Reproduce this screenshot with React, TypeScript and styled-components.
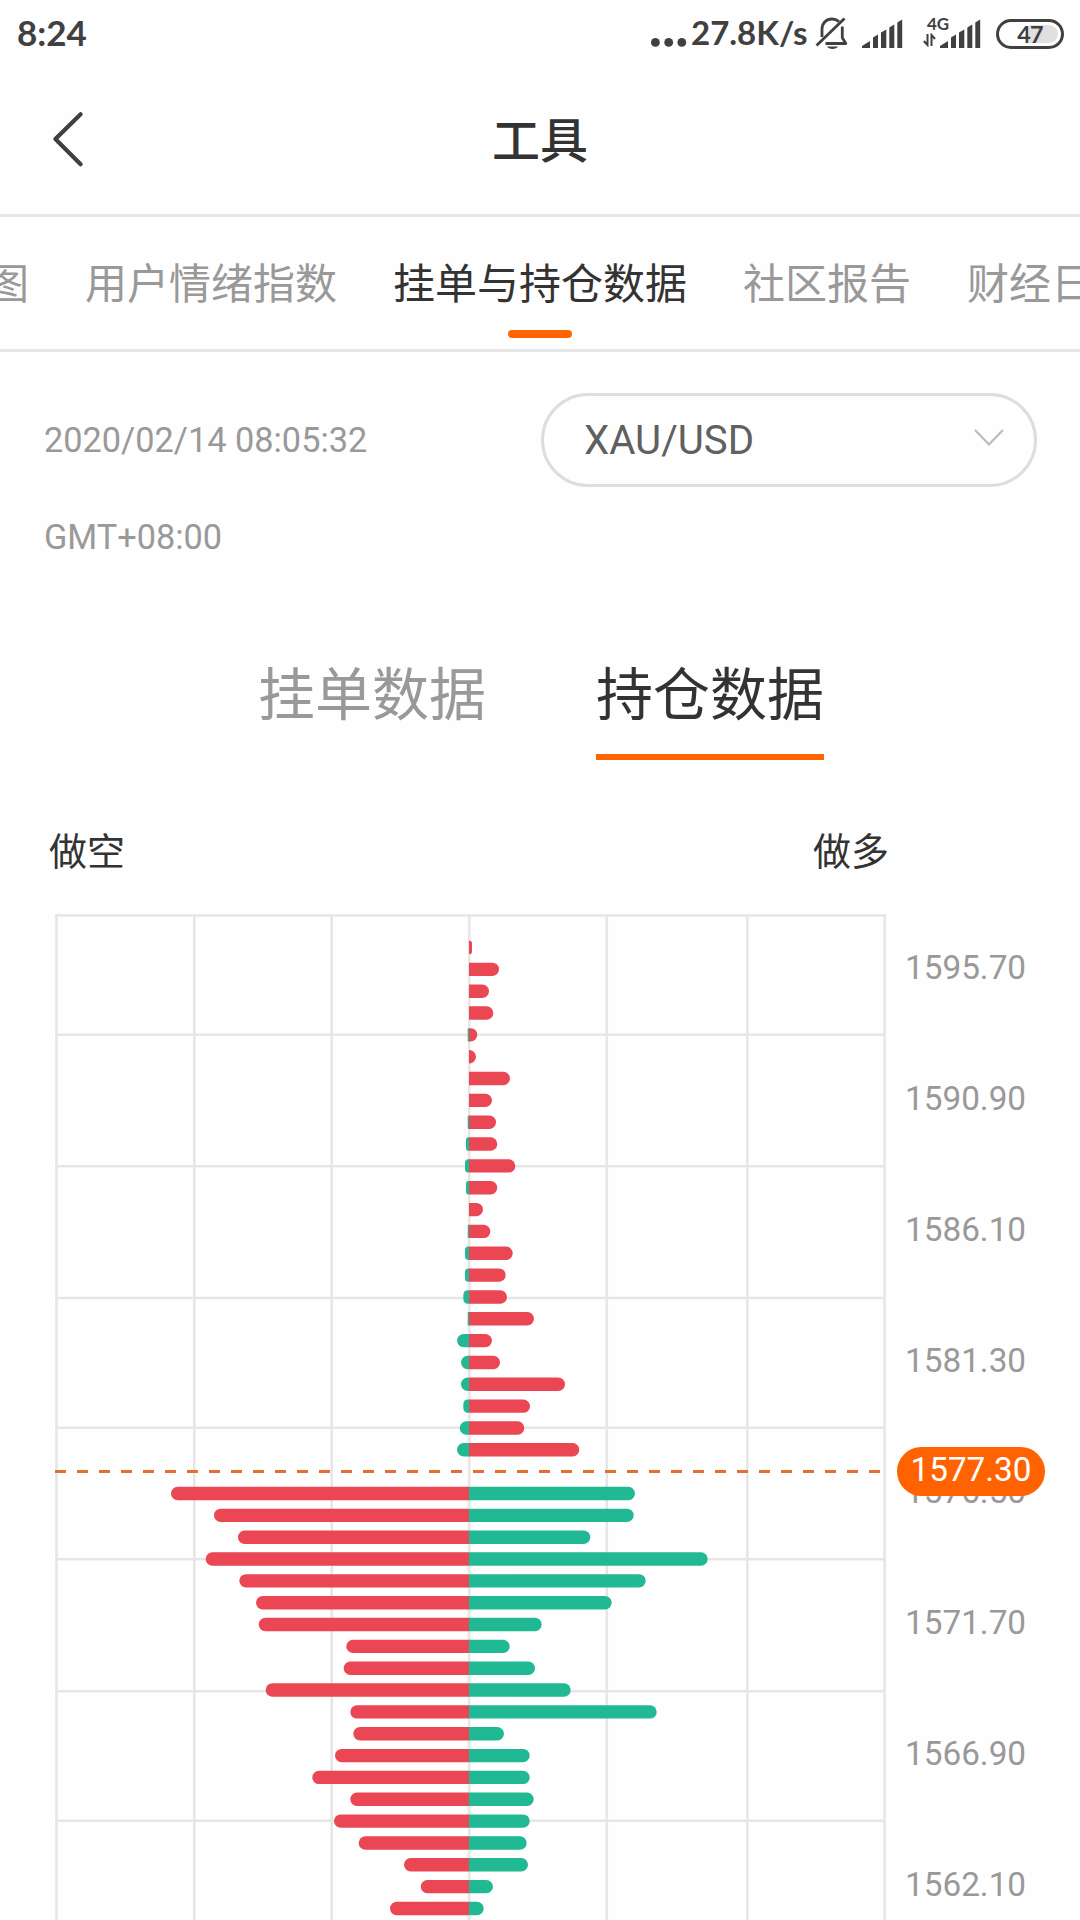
import React from "react";
import styled, { createGlobalStyle } from "styled-components";

const GlobalStyle = createGlobalStyle`
  * { box-sizing: border-box; }
  html, body { margin: 0; padding: 0; background: #fefefe; }
  body { font-family: Roboto, "Noto Sans CJK SC", sans-serif; }
  button { font: inherit; color: inherit; background: none; border: 0; padding: 0; margin: 0; }
`;

const ink = "#333333";
const muted = "#999999";
const line = "#e6e6e6";
const orange = "#ff6400";
const red = "#ea4653";
const green = "#20b994";
const statusInk = "#404040";

const Screen = styled.div`
  width: 1080px;
  height: 1920px;
  overflow: hidden;
  display: flex;
  flex-direction: column;
  background: #fefefe;
`;

const StatusBar = styled.div`
  height: 67px;
  flex: none;
  display: flex;
  align-items: center;
  justify-content: space-between;
  padding: 0 16px 0 17px;
  color: ${statusInk};
  font-family: Lato, sans-serif;
  font-weight: 700;
`;

const Clock = styled.span`
  font-size: 35px;
  line-height: 65px;
  height: 67px;
`;

const StatusIcons = styled.div`
  display: flex;
  align-items: center;
  height: 67px;
`;

const Speed = styled.span`
  font-size: 33px;
  line-height: 65px;
  height: 67px;
  width: 118px;
  margin: 0 6px 0 4px;
  white-space: nowrap;
`;

const Battery = styled.span`
  width: 68px;
  height: 30px;
  margin-left: 15px;
  border: 3px solid ${statusInk};
  border-radius: 15px;
  padding: 3px;
  display: flex;
`;

const BatteryLevel = styled.span`
  flex: 1;
  border-radius: 9px;
  background: linear-gradient(90deg, transparent 48%, #e0e0e0 48%);
  font-size: 23.5px;
  letter-spacing: -0.8px;
  line-height: 18px;
  text-align: center;
`;

const Header = styled.header`
  height: 150px;
  flex: none;
  border-bottom: 3px solid ${line};
  display: grid;
  grid-template-columns: 140px 1fr 140px;
  align-items: center;
`;

const BackButton = styled.button`
  display: flex;
  padding-left: 50px;
`;

const Title = styled.h1`
  margin: 0;
  padding-top: 2px;
  text-align: center;
  color: ${ink};
  font-size: 48px;
  font-weight: 500;
  line-height: 70px;
`;

const TabStrip = styled.nav`
  height: 135px;
  flex: none;
  border-bottom: 3px solid ${line};
  display: flex;
  justify-content: center;
  gap: 56px;
  overflow: hidden;
  margin: 0 -300px;
  padding-left: 42px;
`;

const Tab = styled.button<{ $active?: boolean }>`
  position: relative;
  flex: none;
  padding-top: 4px;
  font-size: 42px;
  line-height: 128px;
  white-space: nowrap;
  color: ${(p) => (p.$active ? ink : muted)};
  ${(p) =>
    p.$active &&
    `&::after {
      content: "";
      position: absolute;
      left: 50%;
      bottom: 11px;
      width: 64px;
      height: 8px;
      margin-left: -32px;
      border-radius: 4px;
      background: ${orange};
    }`}
`;

const Controls = styled.section`
  flex: none;
  height: 240px;
  padding: 40px 43px 0 44px;
  display: flex;
  justify-content: space-between;
  align-items: flex-start;
`;

const Timestamp = styled.div`
  display: flex;
  flex-direction: column;
  color: ${muted};
  font-size: 34.3px;
  line-height: 97px;
`;

const Select = styled.button`
  width: 496px;
  height: 94px;
  margin-top: 1px;
  border: 3px solid #dddddf;
  border-radius: 47px;
  padding: 0 29px 0 40px;
  display: flex;
  align-items: center;
  justify-content: space-between;
  color: #606060;
  font-size: 40.2px;
`;

const Segments = styled.div`
  flex: none;
  height: 168px;
  display: flex;
  justify-content: center;
  gap: 110px;
  padding-left: 2px;
`;

const Segment = styled.button<{ $active?: boolean }>`
  height: 168px;
  padding-bottom: 12px;
  padding-top: 58px;
  font-size: 57px;
  line-height: 92px;
  color: ${(p) => (p.$active ? ink : muted)};
  border-bottom: 6px solid ${(p) => (p.$active ? orange : "transparent")};
`;

const Sides = styled.div`
  flex: none;
  height: 154px;
  width: 889px;
  padding: 63px 0 0 49px;
  display: flex;
  justify-content: space-between;
  color: ${ink};
  font-size: 38px;
  line-height: 58px;
`;

const ChartRow = styled.section`
  flex: none;
  height: 1006px;
  display: flex;
  padding-left: 55px;
`;

const Axis = styled.div`
  position: relative;
  display: flex;
  flex-direction: column;
  padding-left: 17px;
  margin-top: -12px;
  color: ${muted};
  font-size: 33.3px;
`;

const Price = styled.span`
  height: 131px;
  line-height: 131px;
`;

const CurrentPrice = styled.span`
  position: absolute;
  left: 9px;
  top: 545px;
  width: 148px;
  height: 49px;
  border-radius: 25px;
  background: #ff6200;
  color: #ffffff;
  line-height: 46px;
  text-align: center;
`;

/* Widths of each row: [left side, right side]. */
const above: [number, number][] = [
  [0, 3], [0, 30], [0, 20], [0, 24.3], [1.3, 8.3], [0, 7], [0, 41], [0, 23],
  [1.3, 27], [3, 28.3], [4, 46.3], [3, 28.3], [0, 14], [1.3, 21.3], [4, 43.7],
  [4, 36.7], [5.7, 38], [1.3, 65], [12, 23], [8, 31], [8, 96], [5.7, 61],
  [9.3, 55.3], [12, 110.3],
];

const below: [number, number][] = [
  [298, 166], [255, 164.7], [231, 121.3], [263.3, 238.7], [229.7, 176.7],
  [213, 142.7], [210.3, 72.7], [122.7, 40.7], [125.3, 66], [203.3, 101.7],
  [118.7, 187.7], [115.7, 35], [134, 60.7], [156.7, 60.7], [118.7, 64.7],
  [135, 60.7], [110.3, 57.7], [65, 59], [48.3, 24], [79, 14.7],
];

const CENTER = 414;
const FIRST = 33.5;
const PITCH = 21.84;
const HALF = 6.7;

function bar(cy: number, width: number, dir: 1 | -1) {
  const ry = HALF;
  const r = Math.min(width, HALF);
  const end = CENTER + dir * width;
  const inner = end - dir * r;
  const sweep = dir === 1 ? 1 : 0;
  if (width < HALF) {
    const c = width * 0.8;
    const base = end - dir * c;
    return `M${CENTER} ${cy - ry}H${base}Q${end} ${cy - ry} ${end} ${cy - ry + c * 1.2}V${cy + ry - c * 1.2}Q${end} ${cy + ry} ${base} ${cy + ry}H${CENTER}Z`;
  }
  return `M${CENTER} ${cy - ry}H${inner}A${r} ${ry} 0 0 ${sweep} ${end} ${cy}A${r} ${ry} 0 0 ${sweep} ${inner} ${cy + ry}H${CENTER}Z`;
}

const columns = [1.5, 139.3, 276.7, 414.2, 551.8, 692.3, 829.6];
const rows = [1.5, 120.7, 252.2, 384, 513.7, 645.3, 777.3, 906.7];

function Chart() {
  const all = [
    ...above.map((v, i) => ({ v, i, left: green, right: red })),
    ...below.map((v, i) => ({ v, i: i + 25, left: red, right: green })),
  ];
  return (
    <svg width="833" height="1006" viewBox="0 0 833 1006">
      <g stroke={line} strokeWidth="2.6">
        {rows.map((y) => (
          <line key={y} x1="0" x2="831" y1={y} y2={y} />
        ))}
        {columns.map((x) => (
          <line key={x} x1={x} x2={x} y1="0" y2="1006" />
        ))}
      </g>
      {all.map(({ v, i, left, right }) => (
        <g key={i}>
          {v[0] > 0 && <path d={bar(FIRST + i * PITCH, v[0], -1)} fill={left} />}
          <path d={bar(FIRST + i * PITCH, v[1], 1)} fill={right} />
        </g>
      ))}
      <line x1="0" x2="826" y1="557.5" y2="557.5" stroke="#e07030" strokeWidth="3" strokeDasharray="11 11" />
    </svg>
  );
}

function Dots() {
  return (
    <svg width="36" height="36" viewBox="651 16 36 36" fill={statusInk}>
      <circle cx="655.4" cy="42.4" r="4.4" />
      <circle cx="668.7" cy="42.4" r="4.4" />
      <circle cx="681.8" cy="42.4" r="4.4" />
    </svg>
  );
}

function MutedBell() {
  return (
    <svg width="34" height="36" viewBox="0 0 34 36" fill="none" stroke={statusInk} strokeWidth="2.8">
      <path d="M7 21V13.500C7 7 11.500 3 17 3c2.800 0 5 .9 7 2.600" />
      <path d="M27.300 10.500v11.200l3.500 5.800H10.500" strokeLinejoin="round" />
      <path d="M1.500 29.500 29.500 2.500" />
      <path d="M12 30.500h11c-1.500 3.200-9.500 3.200-11 0Z" fill={statusInk} stroke="none" />
    </svg>
  );
}

const signalBars = [
  "M0 29 0 27 8 22V29Z",
  "M11 29V18.500L16 15.500V29Z",
  "M19 29V13.500L24.300 10.500V29Z",
  "M27.300 29V8.500L32.300 5.500V29Z",
  "M35.300 29V3.500L40.200 .500V29Z",
];

const SignalIcon = styled.svg<{ $first?: boolean }>`
  margin-left: ${(p) => (p.$first ? 13 : 0)}px;
`;

function Signal({ first }: { first?: boolean }) {
  return (
    <SignalIcon $first={first} width="41" height="30" viewBox="0 0 41 30" fill={statusInk}>
      {signalBars.map((d) => (
        <path key={d} d={d} />
      ))}
    </SignalIcon>
  );
}

const Network = styled.div`
  display: grid;
  grid-template-rows: 14px 16px;
  width: 17px;
  margin-left: 20px;
  font-size: 17px;
  line-height: 9px;
`;

const NetworkLabel = styled.span`
  padding-left: 4px;
`;

function DataArrows() {
  return (
    <svg width="13" height="14" viewBox="0 0 13 14" fill="none" stroke={statusInk} strokeWidth="2">
      <path d="M4.500 1V12L.8 8M8.500 13V2L12 6" />
    </svg>
  );
}

export default function App() {
  return (
    <>
      <GlobalStyle />
      <Screen>
        <StatusBar>
          <Clock>8:24</Clock>
          <StatusIcons>
            <Dots />
            <Speed>27.8K/s</Speed>
            <MutedBell />
            <Signal first />
            <Network>
              <NetworkLabel>4G</NetworkLabel>
              <DataArrows />
            </Network>
            <Signal />
            <Battery>
              <BatteryLevel>47</BatteryLevel>
            </Battery>
          </StatusIcons>
        </StatusBar>

        <Header>
          <BackButton aria-label="返回">
            <svg width="36" height="60" viewBox="50 110.5 36 60" fill="none" stroke={statusInk} strokeWidth="4.2" strokeLinecap="round" strokeLinejoin="round">
              <path d="M80.600 113.700 55.400 138.500 80.600 163.800" />
            </svg>
          </BackButton>
          <Title>工具</Title>
        </Header>

        <TabStrip>
          <Tab>图</Tab>
          <Tab>用户情绪指数</Tab>
          <Tab $active>挂单与持仓数据</Tab>
          <Tab>社区报告</Tab>
          <Tab>财经日历</Tab>
        </TabStrip>

        <Controls>
          <Timestamp>
            <span>2020/02/14 08:05:32</span>
            <span>GMT+08:00</span>
          </Timestamp>
          <Select>
            XAU/USD
            <svg width="32" height="22" viewBox="0 0 32 22" fill="none" stroke="#bcbcc0" strokeWidth="2.200">
              <path d="M2 1 16 15.500 30 1" />
            </svg>
          </Select>
        </Controls>

        <Segments>
          <Segment>挂单数据</Segment>
          <Segment $active>持仓数据</Segment>
        </Segments>

        <Sides>
          <span>做空</span>
          <span>做多</span>
        </Sides>

        <ChartRow>
          <Chart />
          <Axis>
            <Price>1595.70</Price>
            <Price>1590.90</Price>
            <Price>1586.10</Price>
            <Price>1581.30</Price>
            <Price>1576.50</Price>
            <Price>1571.70</Price>
            <Price>1566.90</Price>
            <Price>1562.10</Price>
            <CurrentPrice>1577.30</CurrentPrice>
          </Axis>
        </ChartRow>
      </Screen>
    </>
  );
}
